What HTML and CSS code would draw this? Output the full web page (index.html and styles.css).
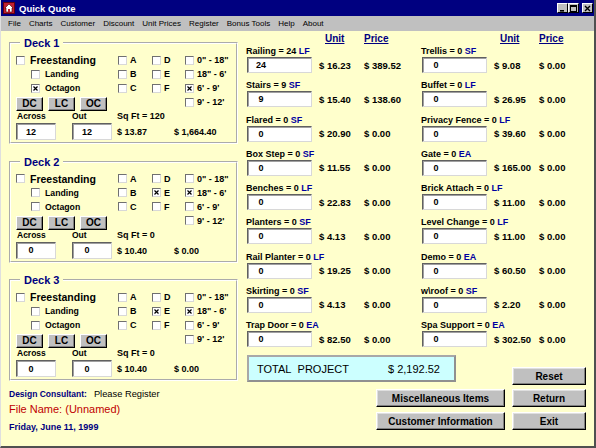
FILE: index.html
```html
<!DOCTYPE html>
<html lang="en">
<head>
    <meta charset="UTF-8">
    <title>Quick Quote</title>
    <link rel="stylesheet" href="styles.css">
</head>
<body>
<div class="window">

    <!-- Barra de titulo -->
    <div class="titlebar">
        <svg class="app-icon" width="12" height="12" viewBox="0 0 12 12">
            <rect x="0.5" y="0.5" width="11" height="11" fill="#c02030" stroke="#600010"/>
            <polygon points="6,2 10,6 9,6 9,10 3,10 3,6 2,6" fill="#fff" stroke="#400" stroke-width="0.6"/>
            <rect x="5" y="7" width="2" height="3" fill="#c02030"/>
        </svg>
        <span class="title">Quick Quote</span>
        <div class="caption-btns">
            <span class="cap-btn"><svg width="7" height="7" viewBox="0 0 7 7"><rect x="1" y="5" width="4" height="1.6" fill="#000"/></svg></span>
            <span class="cap-btn"><svg width="7" height="7" viewBox="0 0 7 7"><rect x="0.5" y="0.5" width="6" height="6" fill="none" stroke="#000"/><rect x="0.5" y="0.5" width="6" height="1.5" fill="#000"/></svg></span>
            <span class="cap-btn close"><svg width="7" height="7" viewBox="0 0 7 7"><path d="M1 1L6 6M6 1L1 6" stroke="#000" stroke-width="1.4"/></svg></span>
        </div>
    </div>

    <!-- Menu -->
    <div class="menubar">
        <span>File</span><span>Charts</span><span>Customer</span><span>Discount</span><span>Unit Prices</span>
        <span>Register</span><span>Bonus Tools</span><span>Help</span><span>About</span>
    </div>

    <div class="client">
        <!-- Coluna dos decks -->
        <div class="left">
            <fieldset class="deck">
                <legend>Deck 1</legend>
                <div class="deck-grid">
                    <label class="chk big"><span class="cb"></span>Freestanding</label>
                    <label class="chk let"><span class="cb"></span>A</label>
                    <label class="chk let"><span class="cb"></span>D</label>
                    <label class="chk"><span class="cb"></span>0" - 18"</label>
                    <label class="chk sub"><span class="cb"></span>Landing</label>
                    <label class="chk let"><span class="cb"></span>B</label>
                    <label class="chk let"><span class="cb"></span>E</label>
                    <label class="chk"><span class="cb"></span>18" - 6'</label>
                    <label class="chk sub"><span class="cb on"><svg width="7" height="7" viewBox="0 0 7 7"><path d="M1.5 1.5L5.5 5.5M5.5 1.5L1.5 5.5" stroke="#000" stroke-width="1.2"/></svg></span>Octagon</label>
                    <label class="chk let"><span class="cb"></span>C</label>
                    <label class="chk let"><span class="cb"></span>F</label>
                    <label class="chk"><span class="cb on"><svg width="7" height="7" viewBox="0 0 7 7"><path d="M1.5 1.5L5.5 5.5M5.5 1.5L1.5 5.5" stroke="#000" stroke-width="1.2"/></svg></span>6' - 9'</label>
                    <div class="deck-btns"><button class="sbtn">DC</button><button class="sbtn">LC</button><button class="sbtn">OC</button></div>
                    <label class="chk last"><span class="cb"></span>9' - 12'</label>
                    <div class="dims-labels"><span>Across</span><span>Out</span></div>
                    <div class="sqft">Sq Ft = 120</div>
                    <div class="dims"><input class="fld" value="12"><input class="fld" value="12"></div>
                    <div class="money"><span>$ 13.87</span><span>$ 1,664.40</span></div>
                </div>
            </fieldset>

            <fieldset class="deck">
                <legend>Deck 2</legend>
                <div class="deck-grid">
                    <label class="chk big"><span class="cb"></span>Freestanding</label>
                    <label class="chk let"><span class="cb"></span>A</label>
                    <label class="chk let"><span class="cb"></span>D</label>
                    <label class="chk"><span class="cb"></span>0" - 18"</label>
                    <label class="chk sub"><span class="cb"></span>Landing</label>
                    <label class="chk let"><span class="cb"></span>B</label>
                    <label class="chk let"><span class="cb on"><svg width="7" height="7" viewBox="0 0 7 7"><path d="M1.5 1.5L5.5 5.5M5.5 1.5L1.5 5.5" stroke="#000" stroke-width="1.2"/></svg></span>E</label>
                    <label class="chk"><span class="cb on"><svg width="7" height="7" viewBox="0 0 7 7"><path d="M1.5 1.5L5.5 5.5M5.5 1.5L1.5 5.5" stroke="#000" stroke-width="1.2"/></svg></span>18" - 6'</label>
                    <label class="chk sub"><span class="cb"></span>Octagon</label>
                    <label class="chk let"><span class="cb"></span>C</label>
                    <label class="chk let"><span class="cb"></span>F</label>
                    <label class="chk"><span class="cb"></span>6' - 9'</label>
                    <div class="deck-btns"><button class="sbtn">DC</button><button class="sbtn">LC</button><button class="sbtn">OC</button></div>
                    <label class="chk last"><span class="cb"></span>9' - 12'</label>
                    <div class="dims-labels"><span>Across</span><span>Out</span></div>
                    <div class="sqft">Sq Ft = 0</div>
                    <div class="dims"><input class="fld" value="0"><input class="fld" value="0"></div>
                    <div class="money"><span>$ 10.40</span><span>$ 0.00</span></div>
                </div>
            </fieldset>

            <fieldset class="deck">
                <legend>Deck 3</legend>
                <div class="deck-grid">
                    <label class="chk big"><span class="cb"></span>Freestanding</label>
                    <label class="chk let"><span class="cb"></span>A</label>
                    <label class="chk let"><span class="cb"></span>D</label>
                    <label class="chk"><span class="cb"></span>0" - 18"</label>
                    <label class="chk sub"><span class="cb"></span>Landing</label>
                    <label class="chk let"><span class="cb"></span>B</label>
                    <label class="chk let"><span class="cb on"><svg width="7" height="7" viewBox="0 0 7 7"><path d="M1.5 1.5L5.5 5.5M5.5 1.5L1.5 5.5" stroke="#000" stroke-width="1.2"/></svg></span>E</label>
                    <label class="chk"><span class="cb on"><svg width="7" height="7" viewBox="0 0 7 7"><path d="M1.5 1.5L5.5 5.5M5.5 1.5L1.5 5.5" stroke="#000" stroke-width="1.2"/></svg></span>18" - 6'</label>
                    <label class="chk sub"><span class="cb"></span>Octagon</label>
                    <label class="chk let"><span class="cb"></span>C</label>
                    <label class="chk let"><span class="cb"></span>F</label>
                    <label class="chk"><span class="cb"></span>6' - 9'</label>
                    <div class="deck-btns"><button class="sbtn">DC</button><button class="sbtn">LC</button><button class="sbtn">OC</button></div>
                    <label class="chk last"><span class="cb"></span>9' - 12'</label>
                    <div class="dims-labels"><span>Across</span><span>Out</span></div>
                    <div class="sqft">Sq Ft = 0</div>
                    <div class="dims"><input class="fld" value="0"><input class="fld" value="0"></div>
                    <div class="money"><span>$ 10.40</span><span>$ 0.00</span></div>
                </div>
            </fieldset>

            <div class="consult"><b>Design Consultant:</b><span>Please Register</span></div>
            <div class="file">File Name: (Unnamed)</div>
            <div class="date">Friday, June 11, 1999</div>
        </div>

        <!-- Itens e precos -->
        <div class="right">
            <div class="items">
                <div class="col">
                    <div class="col-head"><span>Unit</span><span>Price</span></div>
                    <div class="item"><div class="lbl">Railing = 24 <b>LF</b></div><div class="row"><input class="fld wide" value="24"><span class="unit">$ 16.23</span><span>$ 389.52</span></div></div>
                    <div class="item"><div class="lbl">Stairs = 9 <b>SF</b></div><div class="row"><input class="fld wide" value="9"><span class="unit">$ 15.40</span><span>$ 138.60</span></div></div>
                    <div class="item"><div class="lbl">Flared = 0 <b>SF</b></div><div class="row"><input class="fld wide" value="0"><span class="unit">$ 20.90</span><span>$ 0.00</span></div></div>
                    <div class="item"><div class="lbl">Box Step = 0 <b>SF</b></div><div class="row"><input class="fld wide" value="0"><span class="unit">$ 11.55</span><span>$ 0.00</span></div></div>
                    <div class="item"><div class="lbl">Benches = 0 <b>LF</b></div><div class="row"><input class="fld wide" value="0"><span class="unit">$ 22.83</span><span>$ 0.00</span></div></div>
                    <div class="item"><div class="lbl">Planters = 0 <b>SF</b></div><div class="row"><input class="fld wide" value="0"><span class="unit">$ 4.13</span><span>$ 0.00</span></div></div>
                    <div class="item"><div class="lbl">Rail Planter = 0 <b>LF</b></div><div class="row"><input class="fld wide" value="0"><span class="unit">$ 19.25</span><span>$ 0.00</span></div></div>
                    <div class="item"><div class="lbl">Skirting = 0 <b>SF</b></div><div class="row"><input class="fld wide" value="0"><span class="unit">$ 4.13</span><span>$ 0.00</span></div></div>
                    <div class="item"><div class="lbl">Trap Door = 0 <b>EA</b></div><div class="row"><input class="fld wide" value="0"><span class="unit">$ 82.50</span><span>$ 0.00</span></div></div>
                </div>
                <div class="col">
                    <div class="col-head"><span>Unit</span><span>Price</span></div>
                    <div class="item"><div class="lbl">Trellis = 0 <b>SF</b></div><div class="row"><input class="fld wide" value="0"><span class="unit">$ 9.08</span><span>$ 0.00</span></div></div>
                    <div class="item"><div class="lbl">Buffet = 0 <b>LF</b></div><div class="row"><input class="fld wide" value="0"><span class="unit">$ 26.95</span><span>$ 0.00</span></div></div>
                    <div class="item"><div class="lbl">Privacy Fence = 0 <b>LF</b></div><div class="row"><input class="fld wide" value="0"><span class="unit">$ 39.60</span><span>$ 0.00</span></div></div>
                    <div class="item"><div class="lbl">Gate = 0 <b>EA</b></div><div class="row"><input class="fld wide" value="0"><span class="unit">$ 165.00</span><span>$ 0.00</span></div></div>
                    <div class="item"><div class="lbl">Brick Attach = 0 <b>LF</b></div><div class="row"><input class="fld wide" value="0"><span class="unit">$ 11.00</span><span>$ 0.00</span></div></div>
                    <div class="item"><div class="lbl">Level Change = 0 <b>LF</b></div><div class="row"><input class="fld wide" value="0"><span class="unit">$ 11.00</span><span>$ 0.00</span></div></div>
                    <div class="item"><div class="lbl">Demo = 0 <b>EA</b></div><div class="row"><input class="fld wide" value="0"><span class="unit">$ 60.50</span><span>$ 0.00</span></div></div>
                    <div class="item"><div class="lbl">w\roof = 0 <b>SF</b></div><div class="row"><input class="fld wide" value="0"><span class="unit">$ 2.20</span><span>$ 0.00</span></div></div>
                    <div class="item"><div class="lbl">Spa Support = 0 <b>EA</b></div><div class="row"><input class="fld wide" value="0"><span class="unit">$ 302.50</span><span>$ 0.00</span></div></div>
                </div>
            </div>

            <div class="total-row">
                <div class="total"><span class="total-lbl">TOTAL&nbsp; PROJECT</span><span>$ 2,192.52</span></div>
                <button class="btn reset">Reset</button>
            </div>
            <div class="btn-row">
                <button class="btn wide">Miscellaneous Items</button>
                <button class="btn">Return</button>
            </div>
            <div class="btn-row last-row">
                <button class="btn wide">Customer Information</button>
                <button class="btn">Exit</button>
            </div>
        </div>
    </div>
</div>
</body>
</html>
```

FILE: styles.css
```css
* {
    box-sizing: border-box;
}

body {
    margin: 0;
    overflow: hidden;
    font-family: "Liberation Sans", Arial, sans-serif;
    color: #000;
}

/* Janela */
.window {
    width: 596px;
    height: 448px;
    background: #c0c0c0;
    border-left: 1px solid #dfdfdf;
    border-right: 2px solid #505050;
    border-bottom: 2px solid #505050;
}

.titlebar {
    height: 16px;
    background: #000080;
    display: flex;
    align-items: center;
    padding: 0 1px 0 2px;
    color: #fff;
}

.app-icon {
    margin-right: 4px;
}

.title {
    font-size: 9.5px;
    font-weight: bold;
}

.caption-btns {
    margin-left: auto;
    display: flex;
}

.cap-btn {
    width: 11px;
    height: 10px;
    background: #c0c0c0;
    border: 1px solid;
    border-color: #fff #000 #000 #fff;
    display: flex;
    justify-content: center;
    align-items: center;
}

.cap-btn.close {
    margin-left: 3px;
}

.menubar {
    height: 15px;
    display: flex;
    align-items: center;
    gap: 8px;
    padding-left: 7px;
    font-size: 8px;
}

/* Area cliente */
.client {
    height: 415px;
    background: #ffffcc;
    display: flex;
}

.left {
    width: 239px;
    padding: 6px 0 0 8px;
}

.deck {
    width: 229px;
    margin: 0;
    padding: 4px 5px 2px;
    border: 2px groove #fff;
}

.deck + .deck {
    margin-top: 11.5px;
}

.deck legend {
    margin-left: 4px;
    padding: 0 4px;
    font-size: 11px;
    line-height: 12px;
    font-weight: bold;
    color: #000080;
}

.deck-grid {
    display: grid;
    grid-template-columns: 101px 34px 34px 1fr;
    grid-template-rows: 14px 14px 14px 16px 11px 18px;
}

.chk {
    display: flex;
    align-items: center;
    gap: 3px;
    height: 14px;
    font-size: 9px;
    font-weight: bold;
    white-space: nowrap;
}

.chk.big {
    gap: 5px;
    font-size: 10.5px;
}

.chk.sub {
    gap: 5px;
    padding-left: 15px;
    font-size: 8.7px;
}

.chk.let {
    padding-left: 1px;
}

.chk.last {
    grid-column: 4;
    align-self: start;
}

.cb {
    width: 9px;
    height: 9px;
    flex: none;
    background: #fff;
    border: 1px solid;
    border-color: #707070 #d8d8d8 #d8d8d8 #707070;
}

.cb svg {
    display: block;
}

.deck-btns {
    display: flex;
    gap: 5px;
    align-self: end;
}

.sbtn {
    width: 27px;
    height: 14px;
    padding: 0;
    font-family: inherit;
    font-size: 10px;
    font-weight: bold;
    line-height: 12px;
    color: #000;
    background: #c0c0c0;
    border: 1px solid;
    border-color: #fff #000 #000 #fff;
    box-shadow: inset -1px -1px 0 #808080;
}

.dims-labels {
    display: flex;
    font-size: 8.5px;
    font-weight: bold;
    line-height: 11px;
}

.dims-labels span:first-child {
    width: 56px;
    padding-left: 1px;
}

.sqft {
    grid-column: 2 / 5;
    font-size: 9px;
    font-weight: bold;
    line-height: 11px;
}

.dims {
    display: flex;
    gap: 16px;
    align-items: end;
}

.money {
    grid-column: 2 / 5;
    display: flex;
    align-self: center;
    padding-top: 2px;
    font-size: 9px;
    font-weight: bold;
}

.money span:first-child {
    width: 57px;
}

/* Campos de texto */
.fld {
    width: 40px;
    height: 17px;
    margin: 0;
    padding: 0 10px 0 0;
    font-family: inherit;
    font-size: 9px;
    font-weight: bold;
    color: #000;
    text-align: center;
    background: #fff;
    border: 1px solid;
    border-color: #606060 #d8d8d8 #d8d8d8 #606060;
    box-shadow: inset 1px 1px 0 #a0a0a0;
}

.fld.wide {
    width: 65px;
    height: 16px;
    margin-left: 1px;
    padding-right: 37px;
}

.consult {
    margin-top: 7px;
    line-height: 12px;
    font-size: 9.3px;
    white-space: nowrap;
}

.consult b {
    font-size: 8.5px;
    color: #000080;
    margin-right: 7px;
}

.file {
    margin-top: 2px;
    line-height: 14px;
    font-size: 11px;
    color: #c00000;
}

.date {
    margin-top: 5px;
    line-height: 12px;
    font-size: 9px;
    font-weight: bold;
    color: #000080;
}

/* Lado direito */
.right {
    flex: 1;
    padding: 2px 0 0 6px;
}

.items {
    display: grid;
    grid-template-columns: 175px 1fr;
}

.col-head {
    height: 12px;
    display: flex;
    padding-left: 79px;
    font-size: 10px;
    line-height: 12px;
    font-weight: bold;
    color: #000080;
}

.col-head span {
    width: 39px;
    text-decoration: underline;
}

.item {
    height: 34.25px;
}

.lbl {
    height: 12px;
    line-height: 12px;
    font-size: 9px;
    font-weight: bold;
    white-space: nowrap;
}

.lbl b {
    color: #0000a0;
}

.row {
    height: 16px;
    display: flex;
    align-items: center;
    font-size: 9.5px;
    font-weight: bold;
    white-space: nowrap;
}

.row .unit {
    width: 45px;
    margin-left: 7px;
}

.total-row {
    display: flex;
    justify-content: space-between;
    align-items: flex-start;
    margin-top: 2px;
    padding-right: 8px;
}

.total {
    width: 209px;
    height: 27px;
    margin-left: 1px;
    display: flex;
    align-items: center;
    padding-left: 8px;
    font-size: 11px;
    background: #ccffff;
    border: 2px solid;
    border-color: #a8a8a8 #909090 #909090 #a8a8a8;
}

.total-lbl {
    width: 131px;
}

.btn {
    width: 74px;
    height: 18px;
    padding: 0;
    font-family: inherit;
    font-size: 10px;
    font-weight: bold;
    color: #000;
    background: #c0c0c0;
    border: 1px solid;
    border-color: #fff #000 #000 #fff;
    box-shadow: inset -1px -1px 0 #808080, inset 1px 1px 0 #dfdfdf;
}

.btn.reset {
    margin-top: 12px;
}

.btn.wide {
    width: 129px;
}

.btn-row {
    display: flex;
    justify-content: flex-end;
    gap: 7px;
    margin-top: 4px;
    padding-right: 8px;
}

.btn-row.last-row {
    margin-top: 5px;
}
```
